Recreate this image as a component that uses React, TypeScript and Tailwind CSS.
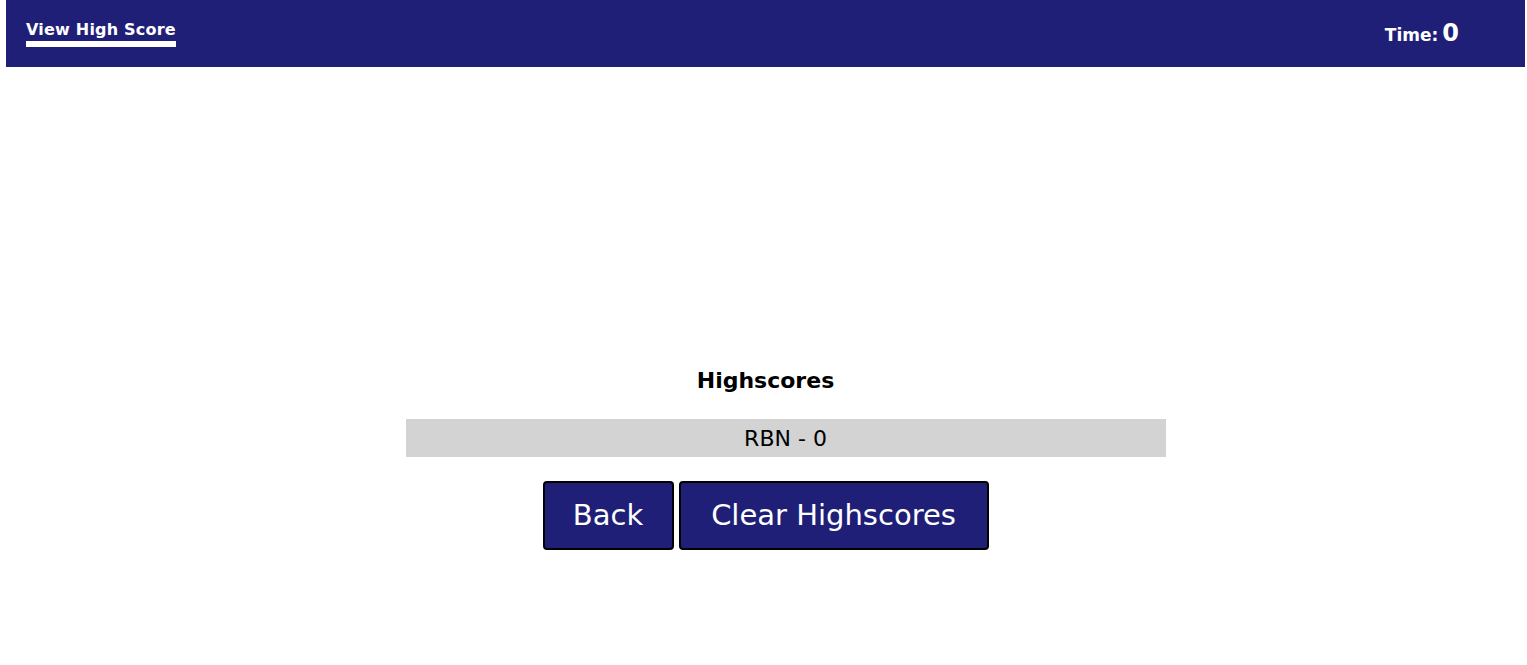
import React from 'react'

const scores = [{ initials: 'RBN', score: 0 }]

export default function App() {
  return (
    <div className="min-h-screen bg-white pl-[6px] pr-[2px] font-['DejaVu_Sans',sans-serif] text-black">
      <header className="flex h-[67px] items-start justify-between bg-[#201f78] text-white">
        <a href="#" className="ml-[20px] mt-[19px] border-b-[6px] border-white text-[16px] font-bold leading-[22px] tracking-[0.2px] text-white">
          View High Score
        </a>
        <div className="mr-[66px] mt-[15px] flex items-baseline gap-[4px] font-bold">
          <span className="text-[17px]">Time:</span>
          <span className="text-[24px]">0</span>
        </div>
      </header>

      <main className="flex flex-col items-center pt-[300px]">
        <h2 className="text-[22px] font-bold leading-[28px]">Highscores</h2>
        <ul className="mt-[24px] w-[760px] translate-x-[20px]">
          {scores.map((s) => (
            <li key={s.initials} className="flex h-[38px] items-center justify-center bg-[#d3d3d3] text-[22px]">
              {s.initials} - {s.score}
            </li>
          ))}
        </ul>
        <div className="mt-[24px] flex gap-[5px]">
          <button className="h-[69px] w-[131px] rounded-[4px] border-2 border-black bg-[#201f78] text-[29px] text-white">
            Back
          </button>
          <button className="h-[69px] w-[310px] rounded-[4px] border-2 border-black bg-[#201f78] text-[29px] text-white">
            Clear Highscores
          </button>
        </div>
      </main>
    </div>
  )
}
